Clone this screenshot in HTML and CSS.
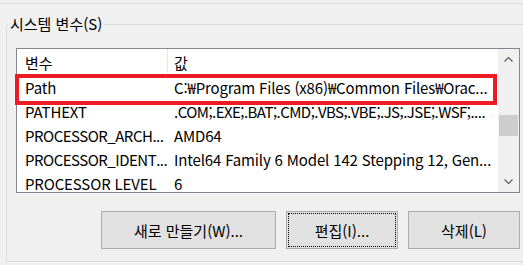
FILE: index.html
```html
<!DOCTYPE html>
<html lang="ko">
<head>
    <meta charset="UTF-8">
    <meta name="viewport" content="width=device-width, initial-scale=1.0">
    <title>시스템 변수</title>
    <link rel="stylesheet" href="styles.css">
</head>
<body>

    <div class="top-rule"></div>

    <fieldset class="group">
        <legend>시스템 변수(S)</legend>

        <div class="listbox">
            <div class="list">
                <div class="row head">
                    <span class="col-name">변수</span>
                    <span class="col-value">값</span>
                </div>
                <div class="row">
                    <span class="col-name">Path</span>
                    <span class="col-value">C:₩Program Files (x86)₩Common Files₩Orac...</span>
                </div>
                <div class="row">
                    <span class="col-name">PATHEXT</span>
                    <span class="col-value tight">.COM;.EXE;.BAT;.CMD;.VBS;.VBE;.JS;.JSE;.WSF;....</span>
                </div>
                <div class="row">
                    <span class="col-name trunc">PROCESSOR_ARCH...</span>
                    <span class="col-value">AMD64</span>
                </div>
                <div class="row">
                    <span class="col-name trunc">PROCESSOR_IDENT...</span>
                    <span class="col-value">Intel64 Family 6 Model 142 Stepping 12, Gen...</span>
                </div>
                <div class="row">
                    <span class="col-name">PROCESSOR LEVEL</span>
                    <span class="col-value">6</span>
                </div>
            </div>

            <div class="scrollbar">
                <div class="arrow">
                    <svg width="9" height="5" viewBox="0 0 9 5"><polyline points="0.5,4.5 4.5,0.5 8.5,4.5" /></svg>
                </div>
                <div class="track">
                    <div class="thumb"></div>
                </div>
                <div class="arrow">
                    <svg width="9" height="5" viewBox="0 0 9 5"><polyline points="0.5,0.5 4.5,4.5 8.5,0.5" /></svg>
                </div>
            </div>

            <!-- red annotation box around the Path row -->
            <div class="highlight"></div>
        </div>

        <div class="buttons">
            <button class="btn-new">새로 만들기(W)...</button>
            <button class="btn-edit">편집(I)...</button>
            <button class="btn-delete">삭제(L)</button>
        </div>
    </fieldset>

</body>
</html>
```

FILE: styles.css
```css
* {
    margin: 0;
    padding: 0;
    box-sizing: border-box;
}

body {
    background-color: #f0f0f0;
    font-family: 'Noto Sans CJK KR', 'Noto Sans', sans-serif;
    font-size: 15px;
    color: #000;
    width: 523px;
    height: 265px;
    overflow: hidden;
}

.top-rule {
    height: 1px;
    margin-top: 3px;
    background-color: #dcdcdc;
}

.group {
    margin: 10px 0 0 6px;
    padding: 14px 3px 12px 9px;
    border: 1px solid #dcdcdc;
    border-right: none;
    min-width: 0;
}

.group legend {
    margin-left: -8px;
    padding: 0 2px;
    line-height: 20px;
}

/* List view */
.listbox {
    position: relative;
    display: flex;
    height: 145px;
    border: 1px solid #828790;
    background-color: #fff;
}

.list {
    flex: 1;
    overflow: hidden;
}

.row {
    display: flex;
    height: 24px;
    line-height: 23px;
    white-space: nowrap;
    letter-spacing: -0.15px;
}

.row.head {
    height: 27px;
    line-height: 27px;
}

.col-name {
    flex-shrink: 0;
    width: 150px;
    padding-left: 8px;
}

.col-name.trunc {
    letter-spacing: -0.5px;
}

.col-value {
    padding-left: 7px;
}

.col-value.tight {
    letter-spacing: -0.55px;
}

.row.head .col-name {
    border-right: 1px solid #e5e5e5;
    width: 151px;
    height: 24px;
}

.row.head .col-value {
    padding-left: 6px;
}

/* Scrollbar */
.scrollbar {
    display: flex;
    flex-direction: column;
    width: 21px;
    background-color: #f0f0f0;
}

.arrow {
    display: flex;
    justify-content: center;
    align-items: center;
    height: 21px;
}

.arrow polyline {
    fill: none;
    stroke: #606060;
    stroke-width: 1.2;
}

.track {
    flex: 1;
}

.thumb {
    height: 21px;
    margin: 45px 1px 0 1px;
    background-color: #cdcdcd;
}

.highlight {
    position: absolute;
    left: -2px;
    top: 25px;
    width: 482px;
    height: 31px;
    border: 4px solid #ed1c24;
}

/* Buttons */
.buttons {
    display: flex;
    justify-content: flex-end;
    gap: 10px;
    margin-top: 18px;
}

button {
    height: 38px;
    width: 112px;
    background-color: #e1e1e1;
    border: 1px solid #adadad;
    font-family: inherit;
    font-size: 15px;
    color: #000;
}

.btn-new {
    width: 175px;
}

.btn-edit {
    outline: 1px dotted #000;
    outline-offset: -3px;
}
```
